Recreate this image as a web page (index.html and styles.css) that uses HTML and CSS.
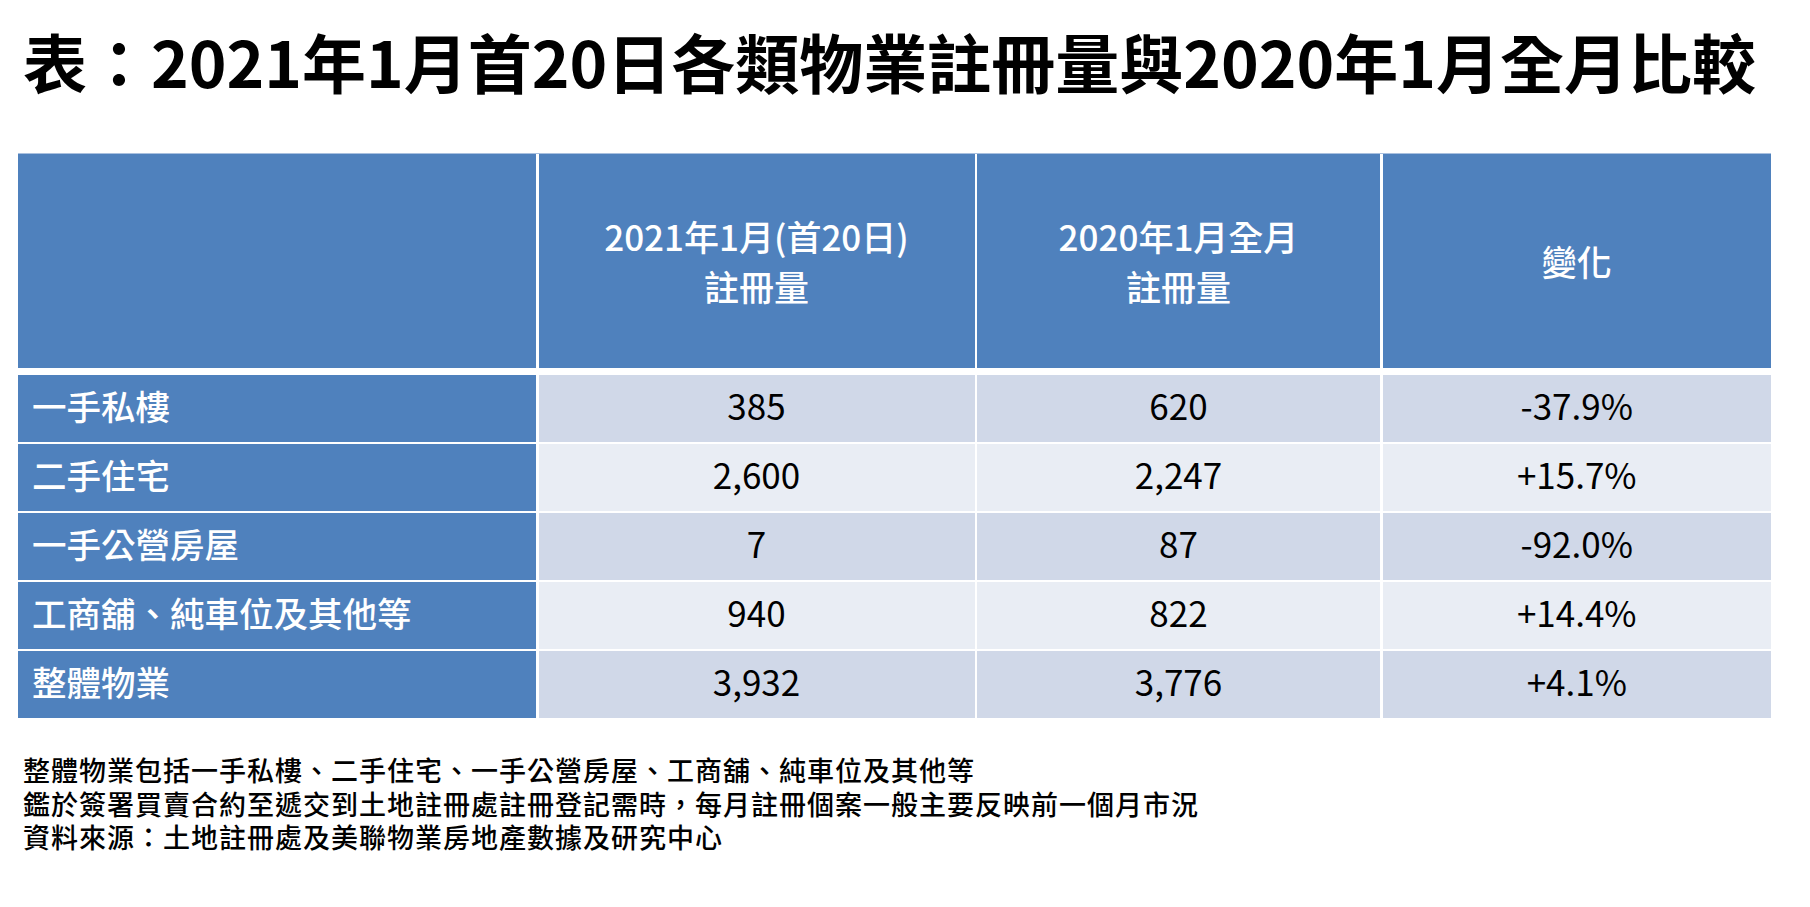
FILE: index.html
```html
<!DOCTYPE html>
<html lang="zh-Hant">
<head>
<meta charset="utf-8">
<title>表：2021年1月首20日各類物業註冊量與2020年1月全月比較</title>
<link rel="stylesheet" href="styles.css">
</head>
<body>
<div class="page">
  <h1 class="title">表：2021年1月首20日各類物業註冊量與2020年1月全月比較</h1>
  <div class="table">
    <div class="row head">
      <div class="cell label"></div>
      <div class="cell">2021年1月(首20日)<br>註冊量</div>
      <div class="cell">2020年1月全月<br>註冊量</div>
      <div class="cell">變化</div>
    </div>
    <div class="row odd">
      <div class="cell label">一手私樓</div>
      <div class="cell">385</div>
      <div class="cell">620</div>
      <div class="cell">-37.9%</div>
    </div>
    <div class="row even">
      <div class="cell label">二手住宅</div>
      <div class="cell">2,600</div>
      <div class="cell">2,247</div>
      <div class="cell">+15.7%</div>
    </div>
    <div class="row odd">
      <div class="cell label">一手公營房屋</div>
      <div class="cell">7</div>
      <div class="cell">87</div>
      <div class="cell">-92.0%</div>
    </div>
    <div class="row even">
      <div class="cell label">工商舖、純車位及其他等</div>
      <div class="cell">940</div>
      <div class="cell">822</div>
      <div class="cell">+14.4%</div>
    </div>
    <div class="row odd">
      <div class="cell label">整體物業</div>
      <div class="cell">3,932</div>
      <div class="cell">3,776</div>
      <div class="cell">+4.1%</div>
    </div>
  </div>
  <div class="notes">
    <p>整體物業包括一手私樓、二手住宅、一手公營房屋、工商舖、純車位及其他等</p>
    <p>鑑於簽署買賣合約至遞交到土地註冊處註冊登記需時，每月註冊個案一般主要反映前一個月市況</p>
    <p>資料來源：土地註冊處及美聯物業房地產數據及研究中心</p>
  </div>
</div>
</body>
</html>
```

FILE: styles.css
```css
html, body {
  margin: 0;
  padding: 0;
  background: #ffffff;
}

body {
  font-family: "Noto Sans CJK TC", "Noto Sans", sans-serif;
  color: #000000;
}

.page {
  width: 1810px;
  height: 907px;
  overflow: hidden;
}

.title {
  margin: 20px 0 0 23px;
  font-size: 64px;
  line-height: 80px;
  height: 80px;
  font-weight: 700;
  white-space: nowrap;
}

.table {
  margin: 53px 0 0 18px;
  width: 1753px;
  display: flex;
  flex-direction: column;
  gap: 2px;
  border-top: 1px solid #a9c0df;
}

.row {
  display: grid;
  grid-template-columns: 518px 436px 403px 1fr;
  column-gap: 2.5px;
  height: 67px;
}

.row.head {
  height: 214px;
  margin-bottom: 5px;
}

.cell {
  display: flex;
  align-items: center;
  justify-content: center;
  text-align: center;
  font-size: 35px;
  line-height: 50px;
  font-weight: 400;
  padding-bottom: 7px;
  box-sizing: border-box;
}

.head .cell {
  background: #4f81bd;
  color: #ffffff;
  font-weight: 500;
  font-size: 35px;
  padding-bottom: 0;
}

.cell.label {
  background: #4f81bd;
  color: #ffffff;
  justify-content: flex-start;
  text-align: left;
  padding-left: 14px;
  font-weight: 500;
  font-size: 34.5px;
}

.odd .cell {
  background: #d0d8e8;
}

.even .cell {
  background: #e9edf4;
}

.odd .cell.label,
.even .cell.label {
  background: #4f81bd;
}

.notes {
  margin: 35px 0 0 23px;
}

.notes p {
  margin: 0;
  font-size: 27px;
  line-height: 33.5px;
  letter-spacing: 1px;
  font-weight: 500;
  white-space: nowrap;
}
```
